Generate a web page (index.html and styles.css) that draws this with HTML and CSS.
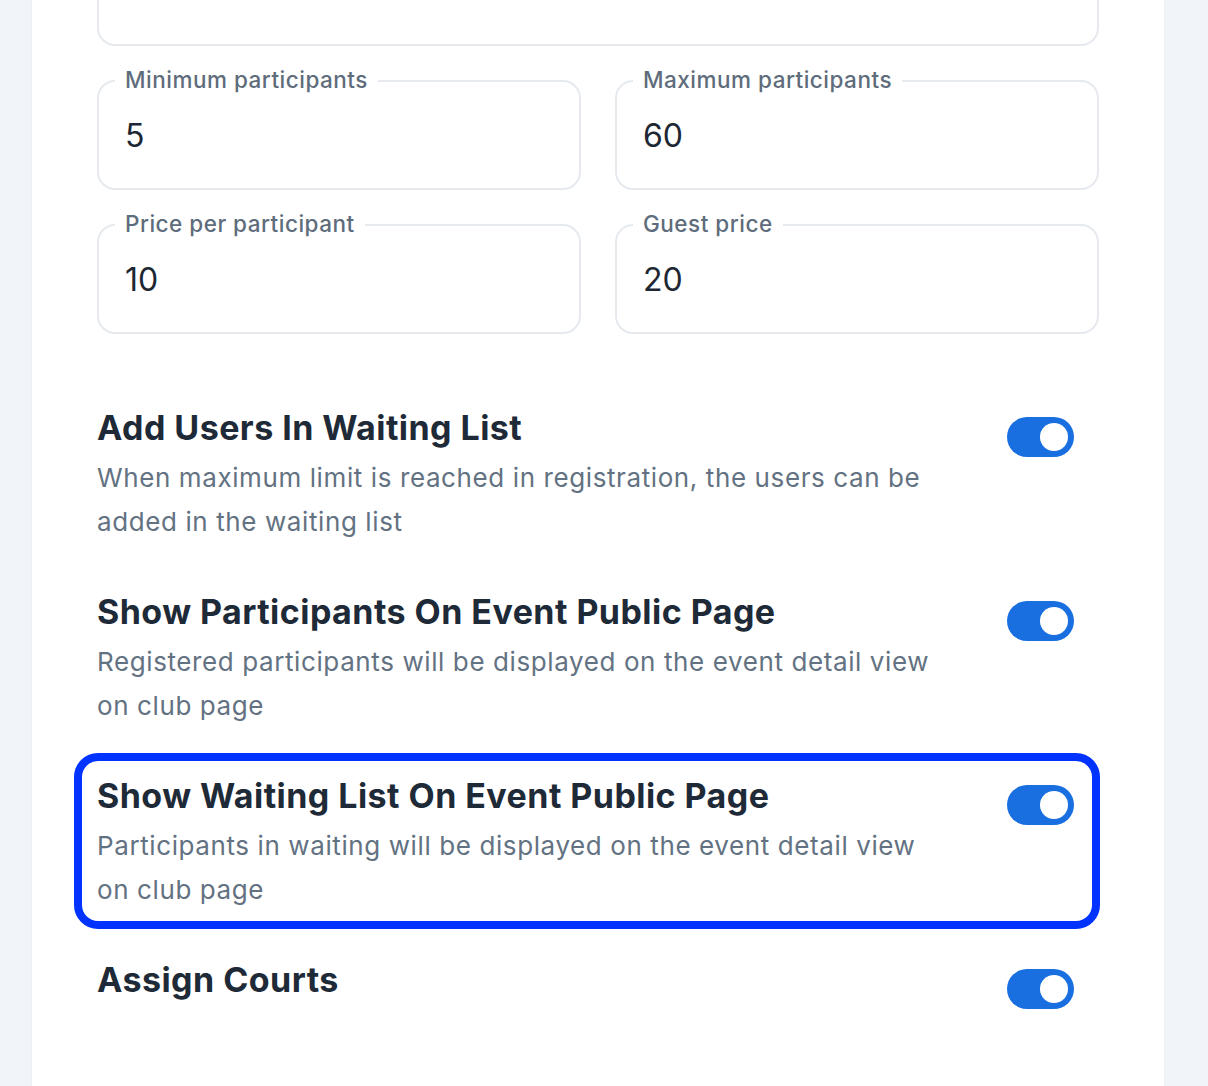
FILE: index.html
```html
<!DOCTYPE html>
<html>
<head>
<meta charset="utf-8">
<link rel="stylesheet" href="styles.css">
</head>
<body>
<div class="card">
  <div class="fields">
    <div class="field full"></div>
    <div class="field"><span class="label">Minimum participants</span><span class="value">5</span></div>
    <div class="field"><span class="label">Maximum participants</span><span class="value">60</span></div>
    <div class="field"><span class="label">Price per participant</span><span class="value">10</span></div>
    <div class="field"><span class="label">Guest price</span><span class="value">20</span></div>
  </div>
  <div class="rows">
    <div class="row">
      <div class="text">
        <div class="title">Add Users In Waiting List</div>
        <div class="desc">When maximum limit is reached in registration, the users can be added in the waiting list</div>
      </div>
      <span class="toggle"><span class="knob"></span></span>
    </div>
    <div class="row">
      <div class="text">
        <div class="title">Show Participants On Event Public Page</div>
        <div class="desc">Registered participants will be displayed on the event detail view on club page</div>
      </div>
      <span class="toggle"><span class="knob"></span></span>
    </div>
    <div class="row focused">
      <div class="text">
        <div class="title">Show Waiting List On Event Public Page</div>
        <div class="desc">Participants in waiting will be displayed on the event detail view on club page</div>
      </div>
      <span class="toggle"><span class="knob"></span></span>
    </div>
    <div class="row">
      <div class="text">
        <div class="title">Assign Courts</div>
      </div>
      <span class="toggle"><span class="knob"></span></span>
    </div>
  </div>
</div>
</body>
</html>
```
FILE: styles.css
```css
* { box-sizing: border-box; }
html, body { margin: 0; height: 100%; }
body {
  background: #f1f4f8;
  font-family: Inter, "Noto Sans", sans-serif;
  overflow: hidden;
}
.card {
  margin-left: 32px;
  width: 1132px;
  min-height: 100%;
  background: #ffffff;
  padding: 0 65px;
  box-shadow: 0 0 2px rgba(30, 40, 60, 0.06);
}
.fields {
  display: grid;
  grid-template-columns: 1fr 1fr;
  gap: 34px;
}
.field {
  position: relative;
  height: 110px;
  border: 2px solid #e6eaef;
  border-radius: 18px;
  display: flex;
  align-items: center;
  padding-left: 26px;
}
.field.full {
  grid-column: 1 / 3;
  margin-top: -64px;
}
.label {
  position: absolute;
  left: 16px;
  top: -15px;
  padding: 0 10px;
  background: #ffffff;
  font-size: 22.5px;
  line-height: 26px;
  font-weight: 500;
  letter-spacing: 0.5px;
  color: #5e6c7b;
}
.value {
  font-size: 32px;
  color: #1d2733;
}
.rows {
  margin: 59px 7px 0 -15px;
  display: flex;
  flex-direction: column;
  gap: 24px;
}
.row {
  display: flex;
  align-items: flex-start;
  justify-content: space-between;
  padding: 13px 18px 9px 15px;
  border-radius: 16px;
}
.row.focused {
  outline: 8px solid #0033ff;
}
.text { width: 850px; }
.title {
  font-size: 34px;
  line-height: 44px;
  font-weight: 700;
  color: #1e2a37;
  letter-spacing: 0.45px;
}
.desc {
  margin-top: 6px;
  font-size: 26px;
  line-height: 44px;
  letter-spacing: 0.6px;
  color: #637282;
}
.toggle {
  margin-top: 11px;
  width: 67px;
  height: 40px;
  border-radius: 20px;
  background: #1a6fe0;
  display: flex;
  align-items: center;
  justify-content: flex-end;
  padding-right: 6px;
  flex-shrink: 0;
}
.knob {
  width: 28px;
  height: 28px;
  border-radius: 50%;
  background: #ffffff;
}
```
